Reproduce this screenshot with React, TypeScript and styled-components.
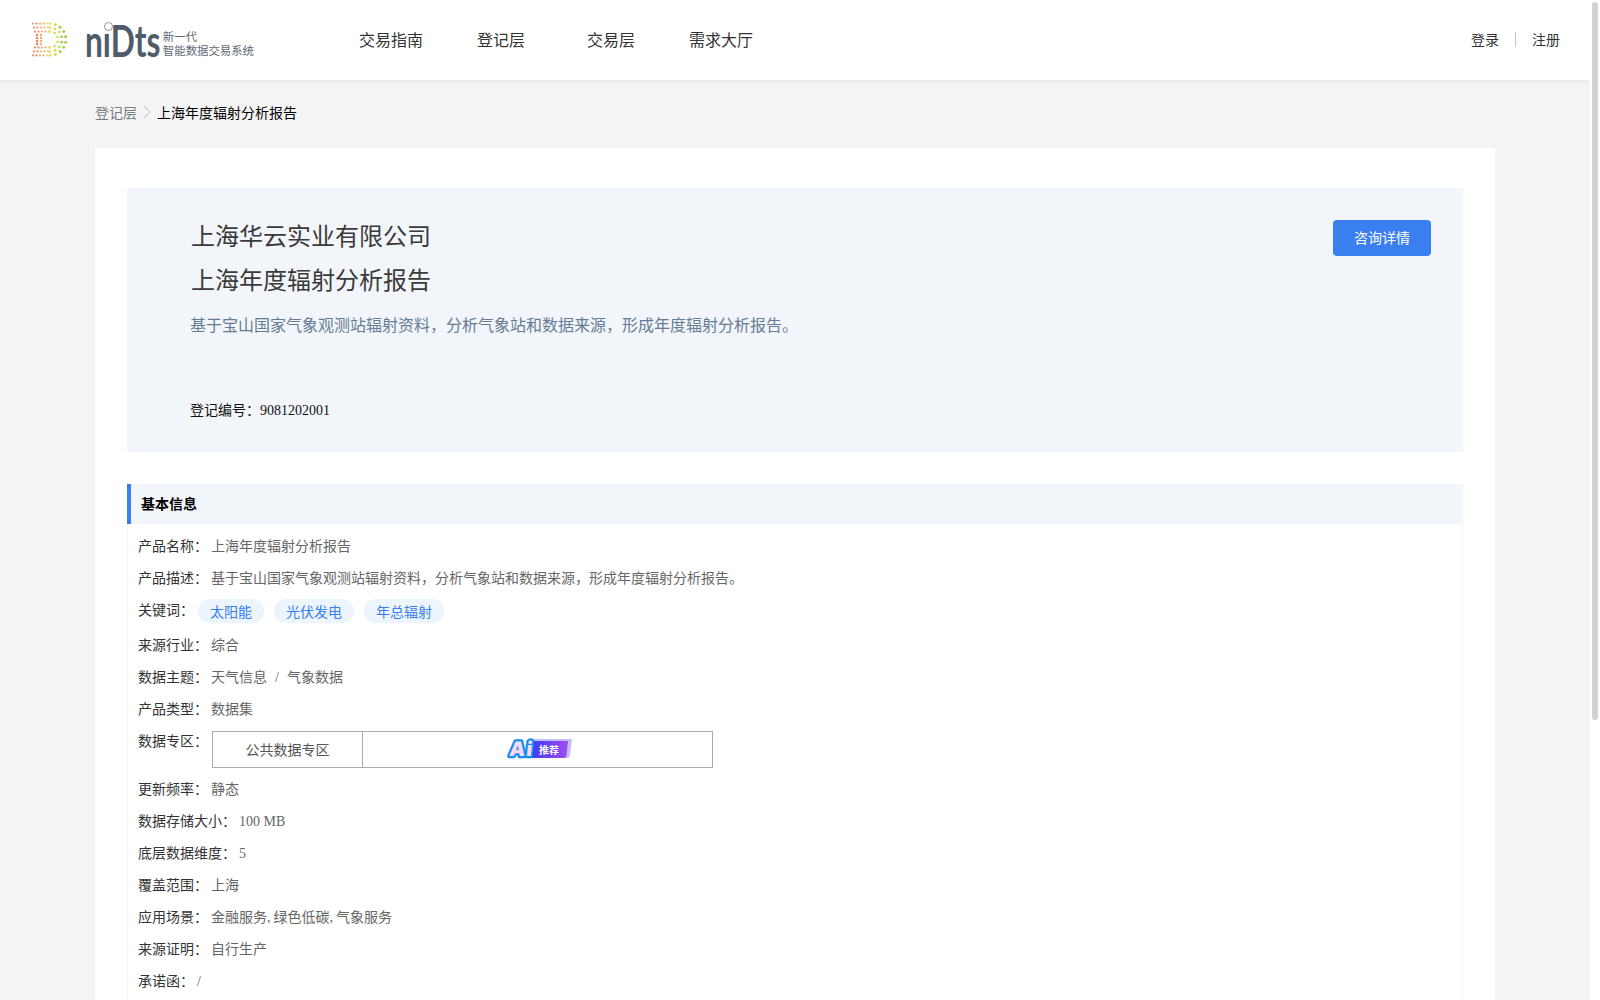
import React from 'react'
import styled, { createGlobalStyle } from 'styled-components'

const GlobalStyle = createGlobalStyle`
  body {
    margin: 0;
    background: #f4f4f4;
    font-family: "Noto Sans CJK SC", "Liberation Sans", sans-serif;
    color: #333333;
  }
`

const Shell = styled.div`
  display: flex;
  height: 100vh;
  overflow: hidden;
`

const Page = styled.div`
  flex: 1;
  min-width: 0;
  overflow: hidden;
`

const ScrollRail = styled.div`
  flex: 0 0 10px;
  padding: 2px 2px 0;
  box-sizing: border-box;
  background: #ffffff;
`

const ScrollThumb = styled.div`
  width: 6px;
  height: 718px;
  border-radius: 3px;
  background: #d1d1d1;
`

const Header = styled.header`
  display: flex;
  align-items: center;
  height: 80px;
  padding: 0 30px;
  background: #ffffff;
  box-shadow: 0 1px 4px rgba(0, 0, 0, 0.08);
`

const Logo = styled.div`
  display: flex;
  align-items: center;
  width: 224px;
  flex-shrink: 0;
`

const WordMark = styled.div`
  position: relative;
  width: 74px;
  height: 34px;
  margin-left: 17px;
  flex-shrink: 0;
`

const WordMarkText = styled.span`
  display: block;
  font-family: Lato, sans-serif;
  font-size: 44px;
  font-weight: 700;
  line-height: 34px;
  color: #4f5a6b;
  transform: scaleX(0.72);
  transform-origin: left center;
  white-space: nowrap;
`

const WordMarkDot = styled.span`
  position: absolute;
  left: 19px;
  top: -1px;
  width: 7px;
  height: 7px;
  border: 1px solid #8d95a1;
  border-radius: 50%;
  background: #ffffff;
`

const Slogan = styled.div`
  margin-left: 4px;
  padding-top: 6px;
  font-size: 11.4px;
  line-height: 14px;
  color: #5f6874;
  white-space: nowrap;
`

const Nav = styled.nav`
  display: flex;
  margin: -2px 0 0 82px;
`

const NavItem = styled.a`
  width: 110px;
  text-align: center;
  font-size: 16px;
  color: #333333;
`

const UserLinks = styled.div`
  display: flex;
  align-items: center;
  margin: -2px 0 0 auto;
  font-size: 14px;
  color: #333333;
`

const UserDivider = styled.span`
  width: 1px;
  height: 15px;
  margin: 0 16px;
  background: #c4c4c4;
`

const Crumbs = styled.div`
  display: flex;
  align-items: center;
  width: 1400px;
  margin: 21px auto 25px;
  font-size: 14px;
  line-height: 22px;
  color: #000000;
`

const CrumbLink = styled.span`
  color: #777c85;
`

const CrumbArrow = styled.svg`
  width: 8px;
  height: 14px;
  margin: 0 6px 0 6px;
`

const Card = styled.main`
  width: 1400px;
  margin: 0 auto;
  padding: 40px 32px;
  box-sizing: border-box;
  background: #ffffff;
`

const Summary = styled.section`
  display: flex;
  justify-content: space-between;
  align-items: flex-start;
  height: 264px;
  padding: 32px 32px 0 64px;
  box-sizing: border-box;
  background: #f2f5f9;
`

const SummaryText = styled.div`
  margin-top: -7px;
`

const Title = styled.h1`
  margin: 0;
  font-size: 24px;
  font-weight: 400;
  line-height: 44px;
  color: #3a3a3a;
`

const Description = styled.p`
  margin: 11px 0 0 -1px;
  font-size: 16px;
  line-height: 24px;
  color: #667c95;
`

const RegNumber = styled.div`
  margin: 62px 0 0 -1px;
  font-size: 14px;
  line-height: 22px;
  color: #111111;
`

const Latin = styled.span`
  font-family: "Liberation Serif", serif;
  font-size: 14px;
  line-height: 1;
`

const Slash = styled(Latin)`
  padding: 0 8px;
`

const Comma = styled(Latin)`
  padding-right: 3px;
`

const ConsultButton = styled.button`
  width: 98px;
  height: 36px;
  padding: 0 0 2px;
  border: none;
  border-radius: 4px;
  background: #3a7ff0;
  color: #ffffff;
  font-family: inherit;
  font-size: 14px;
  cursor: pointer;
`

const SectionTitle = styled.h2`
  margin: 32px 0 0;
  height: 40px;
  padding-left: 10px;
  border-left: 4px solid #3a7ff0;
  background: #f2f5f9;
  font-size: 14px;
  font-weight: 700;
  line-height: 38px;
  color: #000000;
`

const InfoList = styled.div`
  display: flex;
  flex-direction: column;
  padding: 10px 11px 0 10px;
  border: 1px solid #f2f4f7;
  border-top: none;
`

const Row = styled.div`
  display: flex;
  align-items: flex-start;
  min-height: 22px;
  margin-bottom: 10px;
  font-size: 14px;
  line-height: 22px;
`

const Label = styled.span`
  color: #333333;
  white-space: nowrap;
`

const Value = styled.span`
  display: block;
  height: 22px;
  margin-left: 3px;
  color: #666666;
`

const Tags = styled.div`
  display: flex;
  gap: 10px;
  margin: 1px 0 0 4px;
`

const Tag = styled.span`
  height: 24px;
  padding: 0 12px;
  border-radius: 12px;
  background: #ecf4fd;
  color: #3a7ff0;
  font-size: 14px;
  line-height: 24px;
`

const ZoneTable = styled.div`
  display: grid;
  grid-template-columns: 149px 1fr;
  width: 501px;
  height: 37px;
  margin: 2px 0 -1px 4px;
  box-sizing: border-box;
  border: 1px solid #aaaaaa;
`

const ZoneCell = styled.div`
  display: flex;
  align-items: center;
  justify-content: center;
  padding-bottom: 1px;
  color: #555555;
  & + & {
    border-left: 1px solid #aaaaaa;
  }
`

const DLogo = () => {
  const cx = 50
  const cy = 39.5
  const tint = (x: number) =>
    x < 40 ? '#ee7f62' : x < 47 ? '#f2ad62' : x < 54 ? '#f2d65e' : x < 60 ? '#c9dc48' : '#9ccc3f'
  const dots: { x: number; y: number; r: number; o: number }[] = []
  ;[16, 12, 8].forEach((rad, i) => {
    for (let x = 33 + i; x < cx; x += 3.5) {
      dots.push({ x, y: cy - rad, r: 1.15, o: 0.9 })
      dots.push({ x, y: cy + rad, r: 1.15, o: 0.9 })
    }
    const steps = 9 - i * 2
    for (let s = 0; s <= steps; s++) {
      const a = -Math.PI / 2 + (Math.PI * s) / steps
      dots.push({ x: cx + rad * Math.cos(a), y: cy + rad * Math.sin(a), r: 1.4 - i * 0.1, o: 1 })
    }
  })
  ;[37, 41].forEach((x) => {
    for (let y = 35; y <= 44; y += 3) dots.push({ x, y, r: 1.2, o: 1 })
  })
  return (
    <svg width="38" height="36" viewBox="30 22 38 36">
      {dots.map((d, i) => (
        <circle key={i} cx={d.x} cy={d.y} r={d.r} fill={tint(d.x)} opacity={d.o} />
      ))}
    </svg>
  )
}

const AiBadge = () => (
  <svg width="68" height="26" viewBox="0 0 68 26" style={{ marginLeft: 4 }}>
    <defs>
      <linearGradient id="badgeFill" x1="0" x2="1" y1="0" y2="0">
        <stop offset="0" stopColor="#3d3df5" />
        <stop offset="1" stopColor="#a24cf0" />
      </linearGradient>
    </defs>
    <path d="M28 3H66L64 19Q63.6 22 61 22H28Z" fill="#c4bdf7" />
    <path d="M26 5H62L60.5 19Q60 22 58 22H26Z" fill="url(#badgeFill)" />
    <text x="33" y="17.5" fontSize="10" fontWeight="700" fill="#ffffff" fontFamily="Noto Sans CJK SC">
      推荐
    </text>
    <text
      x="3"
      y="20.5"
      fontSize="20"
      fontWeight="900"
      fontFamily="Inter"
      letterSpacing="1"
      fill="#fbd9f2"
      stroke="#0f8ff5"
      strokeWidth="4.5"
      strokeLinejoin="round"
      paintOrder="stroke"
      transform="skewX(-6) translate(2 0)"
    >
      Ai
    </text>
  </svg>
)

export default function App() {
  return (
    <Shell>
      <GlobalStyle />
      <Page>
        <Header>
          <Logo>
            <DLogo />
            <WordMark>
              <WordMarkText>nıDts</WordMarkText>
              <WordMarkDot />
            </WordMark>
            <Slogan>
              新一代
              <br />
              智能数据交易系统
            </Slogan>
          </Logo>
          <Nav>
            <NavItem>交易指南</NavItem>
            <NavItem>登记层</NavItem>
            <NavItem>交易层</NavItem>
            <NavItem>需求大厅</NavItem>
          </Nav>
          <UserLinks>
            <span>登录</span>
            <UserDivider />
            <span>注册</span>
          </UserLinks>
        </Header>

        <Crumbs>
          <CrumbLink>登记层</CrumbLink>
          <CrumbArrow viewBox="0 0 8 14">
            <path d="M1 1l6 6-6 6" fill="none" stroke="#bbbbbb" strokeWidth="1" />
          </CrumbArrow>
          <span>上海年度辐射分析报告</span>
        </Crumbs>

        <Card>
          <Summary>
            <SummaryText>
              <Title>上海华云实业有限公司</Title>
              <Title>上海年度辐射分析报告</Title>
              <Description>基于宝山国家气象观测站辐射资料，分析气象站和数据来源，形成年度辐射分析报告。</Description>
              <RegNumber>
                登记编号：<Latin>9081202001</Latin>
              </RegNumber>
            </SummaryText>
            <ConsultButton>咨询详情</ConsultButton>
          </Summary>

          <SectionTitle>基本信息</SectionTitle>
          <InfoList>
            <Row>
              <Label>产品名称：</Label>
              <Value>上海年度辐射分析报告</Value>
            </Row>
            <Row>
              <Label>产品描述：</Label>
              <Value>基于宝山国家气象观测站辐射资料，分析气象站和数据来源，形成年度辐射分析报告。</Value>
            </Row>
            <Row>
              <Label>关键词：</Label>
              <Tags>
                <Tag>太阳能</Tag>
                <Tag>光伏发电</Tag>
                <Tag>年总辐射</Tag>
              </Tags>
            </Row>
            <Row>
              <Label>来源行业：</Label>
              <Value>综合</Value>
            </Row>
            <Row>
              <Label>数据主题：</Label>
              <Value>
                天气信息<Slash>/</Slash>气象数据
              </Value>
            </Row>
            <Row>
              <Label>产品类型：</Label>
              <Value>数据集</Value>
            </Row>
            <Row>
              <Label>数据专区：</Label>
              <ZoneTable>
                <ZoneCell>公共数据专区</ZoneCell>
                <ZoneCell>
                  <AiBadge />
                </ZoneCell>
              </ZoneTable>
            </Row>
            <Row>
              <Label>更新频率：</Label>
              <Value>静态</Value>
            </Row>
            <Row>
              <Label>数据存储大小：</Label>
              <Value>
                <Latin>100 MB</Latin>
              </Value>
            </Row>
            <Row>
              <Label>底层数据维度：</Label>
              <Value>
                <Latin>5</Latin>
              </Value>
            </Row>
            <Row>
              <Label>覆盖范围：</Label>
              <Value>上海</Value>
            </Row>
            <Row>
              <Label>应用场景：</Label>
              <Value>
                金融服务<Comma>,</Comma>绿色低碳<Comma>,</Comma>气象服务
              </Value>
            </Row>
            <Row>
              <Label>来源证明：</Label>
              <Value>自行生产</Value>
            </Row>
            <Row>
              <Label>承诺函：</Label>
              <Value>
                <Latin>/</Latin>
              </Value>
            </Row>
          </InfoList>
        </Card>
      </Page>
      <ScrollRail>
        <ScrollThumb />
      </ScrollRail>
    </Shell>
  )
}
